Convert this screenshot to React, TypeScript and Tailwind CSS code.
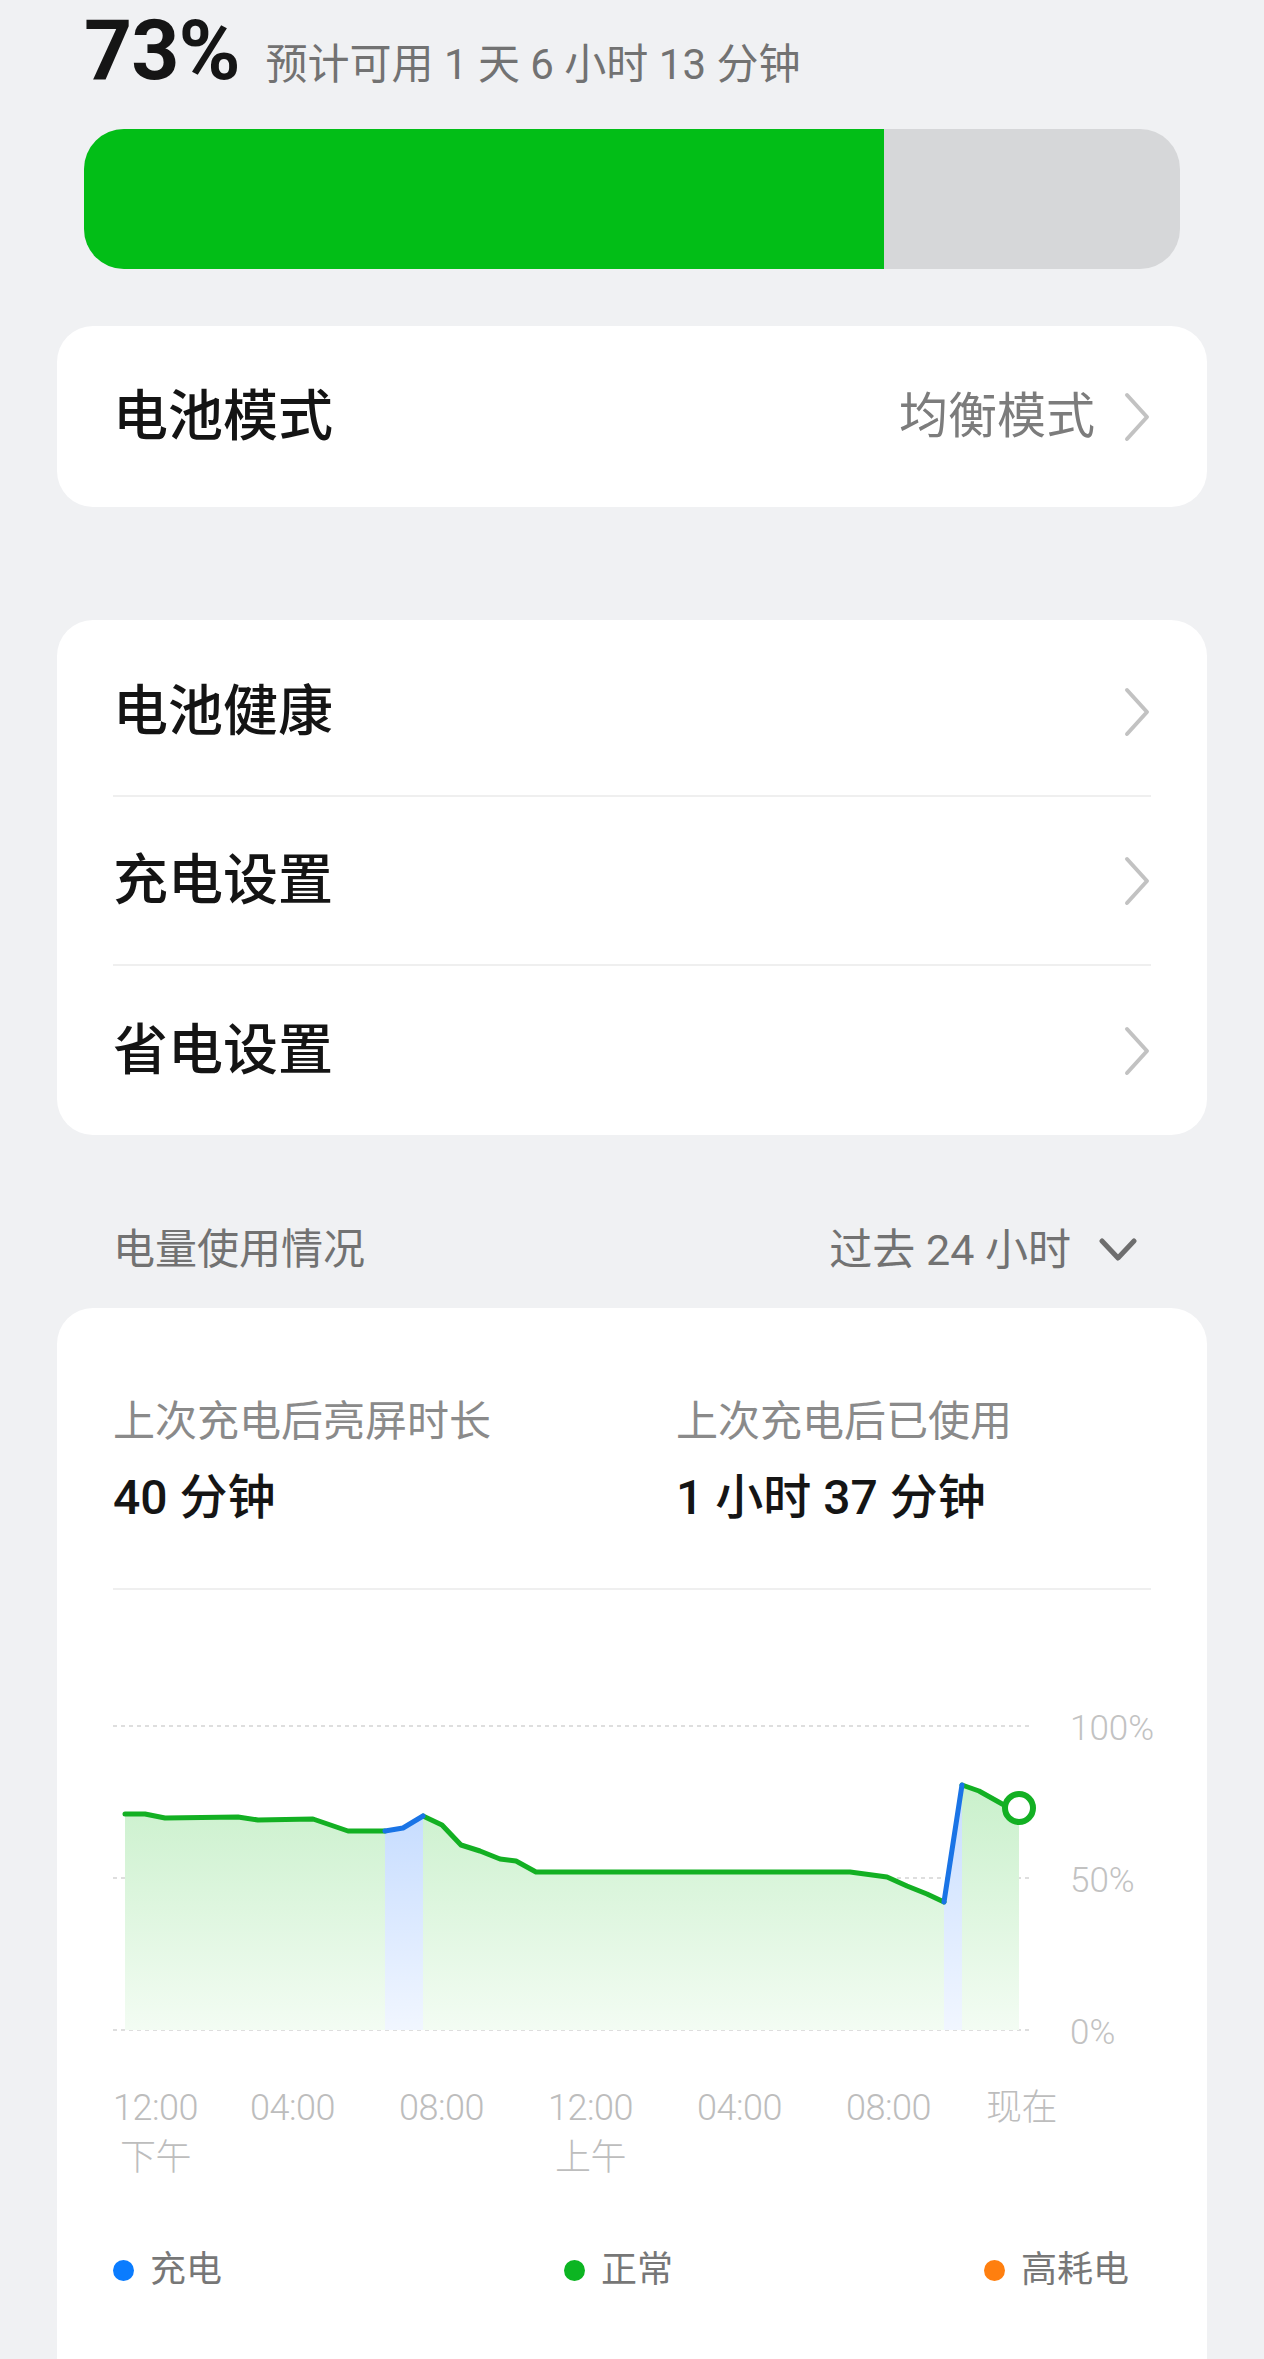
import { ReactNode } from "react";

const FONT = "font-['Roboto','Noto_Sans_CJK_SC',sans-serif]";

const ChevronRight = () => (
  <svg width="28" height="50" viewBox="0 0 28 50" fill="none">
    <path d="M4 3 L24 25 L4 47" stroke="#c2c2c2" strokeWidth={4} strokeLinecap="round" strokeLinejoin="round" />
  </svg>
);

const ChevronDown = () => (
  <svg width="38" height="26" viewBox="0 0 38 26" fill="none">
    <path d="M3 4 L19 21 L35 4" stroke="#6e6e6e" strokeWidth={5} strokeLinecap="round" strokeLinejoin="round" />
  </svg>
);

function Row({ label, value, last }: { label: string; value?: string; last?: boolean }) {
  return (
    <div className={`h-[169px] flex items-center justify-between ${last ? "" : "border-b-2 border-[#efefef]"}`}>
      <span className="text-[55px] leading-none font-medium text-[#141414]">{label}</span>
      <div className="flex items-center gap-[28px]">
        {value && <span className="text-[49px] leading-none text-[#7c7c7c]">{value}</span>}
        <ChevronRight />
      </div>
    </div>
  );
}

// chart points, local coords (svg 1040 x 360)
const pts: [number, number][] = [
  [12, 122], [32, 122], [52, 126], [125, 125], [145, 128], [200, 127], [235, 139], [272, 139],
];
const blue1: [number, number][] = [[272, 139], [290, 136], [310, 124]];
const pts2: [number, number][] = [
  [310, 124], [329, 133], [348, 153], [367, 159], [387, 167], [403, 169], [423, 180],
  [737, 180], [774, 185], [794, 194], [814, 202], [831, 210],
];
const blue2: [number, number][] = [[831, 210], [849, 93]];
const pts3: [number, number][] = [[849, 93], [866, 99], [891, 113], [906, 116]];

const toPath = (p: [number, number][]) => p.map((q, i) => `${i ? "L" : "M"}${q[0]} ${q[1]}`).join(" ");

const all = [...pts, ...blue1.slice(1), ...pts2.slice(1), ...blue2.slice(1), ...pts3.slice(1)];
const areaPath = `${toPath(all)} L906 338 L12 338 Z`;

function Chart() {
  return (
    <svg width="1040" height="360" viewBox="0 0 1040 360" className="block">
      <defs>
        <linearGradient id="gfill" x1="0" y1="0" x2="0" y2="1">
          <stop offset="0" stopColor="#c9f0cb" />
          <stop offset="1" stopColor="#f3fcf3" />
        </linearGradient>
        <linearGradient id="bfill" x1="0" y1="0" x2="0" y2="1">
          <stop offset="0" stopColor="#c7ddff" />
          <stop offset="1" stopColor="#f1f6ff" />
        </linearGradient>
      </defs>
      {[34, 186, 338].map((y) => (
        <line key={y} x1="0" x2="918" y1={y} y2={y} stroke="#dedede" strokeWidth={2} strokeDasharray="4 4" />
      ))}
      <path d={areaPath} fill="url(#gfill)" />
      <path d="M272 139 L290 136 L310 124 L310 338 L272 338 Z" fill="url(#bfill)" />
      <path d="M831 210 L849 93 L849 338 L831 338 Z" fill="url(#bfill)" />
      <g fill="none" strokeWidth={5} strokeLinejoin="round" strokeLinecap="round">
        <path d={toPath(pts)} stroke="#13b023" />
        <path d={toPath(pts2)} stroke="#13b023" />
        <path d={toPath(pts3)} stroke="#13b023" />
        <path d={toPath(blue1)} stroke="#1a74e6" />
        <path d={toPath(blue2)} stroke="#1a74e6" />
      </g>
      <circle cx="906" cy="116" r="14" fill="#fff" stroke="#13b023" strokeWidth={6} />
      <g fill="#c2c2c2" fontSize="35" fontWeight="300" fontFamily="Roboto, sans-serif">
        <text x="957" y="48">100%</text>
        <text x="957" y="200">50%</text>
        <text x="957" y="352">0%</text>
      </g>
    </svg>
  );
}

const ticks: { t: string; sub?: string; w: string }[] = [
  { t: "12:00", sub: "下午", w: "w-[137px]" },
  { t: "04:00", w: "w-[149px]" },
  { t: "08:00", w: "w-[149px]" },
  { t: "12:00", sub: "上午", w: "w-[149px]" },
  { t: "04:00", w: "w-[149px]" },
  { t: "08:00", w: "w-[140px]" },
  { t: "现在", w: "w-auto" },
];

function Legend({ color, label, w }: { color: string; label: ReactNode; w: string }) {
  return (
    <div className={`flex items-center gap-[16px] ${w}`}>
      <span className={`w-[21px] h-[21px] rounded-full ${color}`} />
      <span className="text-[36px] leading-none text-[#777]">{label}</span>
    </div>
  );
}

export default function App() {
  return (
    <div className={`min-h-screen bg-[#f0f1f3] px-[57px] pb-[60px] ${FONT}`}>
      {/* battery summary */}
      <div className="px-[27px] pt-[9px]">
        <div className="flex items-baseline gap-[26px]">
          <span className="text-[84px] leading-none font-bold text-[#151515] tracking-[-1px]">73%</span>
          <span className="text-[42px] leading-none text-[#727272]">预计可用 1 天 6 小时 13 分钟</span>
        </div>
        <div className="mt-[36px] h-[140px] rounded-[40px] bg-[#d6d7d9] overflow-hidden flex">
          <div className="w-[73%] h-full bg-[#02be17]" />
        </div>
      </div>

      <div className="mt-[57px] h-[181px] bg-white rounded-[36px] px-[56px] flex items-center justify-between">
        <span className="text-[55px] leading-none font-medium text-[#141414]">电池模式</span>
        <div className="flex items-center gap-[28px]">
          <span className="text-[49px] leading-none text-[#7c7c7c]">均衡模式</span>
          <ChevronRight />
        </div>
      </div>

      <div className="mt-[113px] bg-white rounded-[36px] px-[56px] pt-[8px]">
        <Row label="电池健康" />
        <Row label="充电设置" />
        <Row label="省电设置" last />
      </div>

      <div className="mt-[85px] h-[60px] px-[56px] flex items-center justify-between">
        <span className="text-[42px] leading-none text-[#727272]">电量使用情况</span>
        <div className="flex items-center gap-[28px] pr-[14px]">
          <span className="text-[43px] leading-none text-[#727272]">过去 24 小时</span>
          <ChevronDown />
        </div>
      </div>

      <div className="mt-[28px] bg-white rounded-t-[36px] px-[56px] pt-[93px] pb-[40px]">
        <div className="flex">
          <div className="w-[563px]">
            <div className="text-[42px] leading-none text-[#8a8a8a]">上次充电后亮屏时长</div>
            <div className="mt-[31px] text-[48px] leading-none font-medium text-[#151515]">40 分钟</div>
          </div>
          <div>
            <div className="text-[42px] leading-none text-[#8a8a8a]">上次充电后已使用</div>
            <div className="mt-[31px] text-[48px] leading-none font-medium text-[#151515]">1 小时 37 分钟</div>
          </div>
        </div>
        <div className="mt-[66px] border-t-2 border-[#efefef]" />

        <div className="mt-[102px]">
          <Chart />
        </div>

        <div className="mt-[31px] flex">
          {ticks.map((k, i) => (
            <div key={i} className={k.w}>
              <div className="inline-flex flex-col items-center text-[36px] leading-[50px] font-light text-[#bdbdbd] tracking-[-0.5px]">
                <span>{k.t}</span>
                {k.sub && <span>{k.sub}</span>}
              </div>
            </div>
          ))}
        </div>

        <div className="mt-[62px] h-[50px] flex items-center">
          <Legend w="w-[451px]" color="bg-[#0a7cff]" label="充电" />
          <Legend w="w-[420px]" color="bg-[#0cb522]" label="正常" />
          <Legend w="w-auto" color="bg-[#ff7f0f]" label="高耗电" />
        </div>

        <div className="mt-[64px] border-t-2 border-[#efefef]" />
        <div className="h-[40px]" />
      </div>
    </div>
  );
}
